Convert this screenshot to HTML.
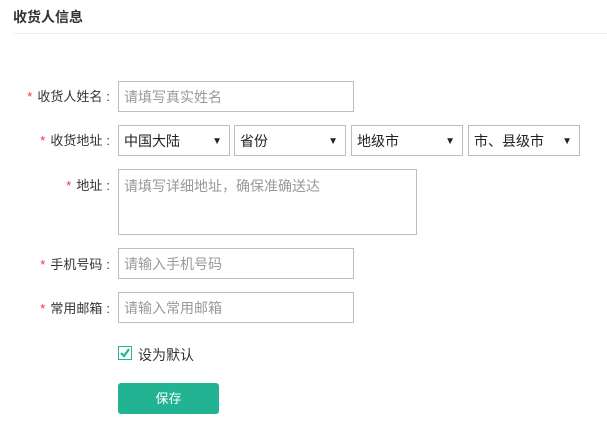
<!DOCTYPE html><html><head><meta charset="utf-8"><style>
*{margin:0;padding:0;box-sizing:border-box}
body{width:607px;height:427px;background:#fff;font-family:"Liberation Sans","Noto Sans CJK SC",sans-serif;font-size:13px;color:#333;position:relative;overflow:hidden}
.t{position:absolute;left:13px;top:7px;font-size:14px;font-weight:bold;color:#333}
.hr{position:absolute;left:13px;top:33px;width:594px;height:1px;background:#ececec}
.l{position:absolute;right:497px;font-size:13px;color:#333;white-space:nowrap;line-height:18px}
.l i{color:#e4393c;font-style:normal;margin-right:5px}
.l b{font-weight:normal;margin-left:4px}
.b{position:absolute;border:1px solid #bdbdbd;background:#fff;padding-left:5px;font-size:14px;color:#999;line-height:30px}
.s{color:#222}
.s span{position:absolute;right:7px;top:1px;font-size:10px;color:#222}
.cb{position:absolute;left:118px;top:346px;width:14px;height:14px;border:1px solid #22b392}
.btn{position:absolute;left:118px;top:383px;width:101px;height:31px;background:#22b392;border-radius:3px;color:#fff;text-align:center;line-height:31px;font-size:13px}
</style></head><body>
<div class="t">收货人信息</div><div class="hr"></div>
<div class="l" style="top:88px"><i>*</i>收货人姓名<b>:</b></div>
<div class="b" style="left:118px;top:81px;width:236px;height:31px">请填写真实姓名</div>
<div class="l" style="top:132px"><i>*</i>收货地址<b>:</b></div>
<div class="b s" style="left:118px;top:125px;width:112px;height:31px">中国大陆<span>▼</span></div>
<div class="b s" style="left:234px;top:125px;width:112px;height:31px">省份<span>▼</span></div>
<div class="b s" style="left:351px;top:125px;width:112px;height:31px">地级市<span>▼</span></div>
<div class="b s" style="left:468px;top:125px;width:112px;height:31px">市、县级市<span>▼</span></div>
<div class="l" style="top:177px"><i>*</i>地址<b>:</b></div>
<div class="b" style="left:118px;top:169px;width:299px;height:66px;line-height:20px;padding-top:6px">请填写详细地址，确保准确送达</div>
<div class="l" style="top:256px"><i>*</i>手机号码<b>:</b></div>
<div class="b" style="left:118px;top:248px;width:236px;height:31px">请输入手机号码</div>
<div class="l" style="top:300px"><i>*</i>常用邮箱<b>:</b></div>
<div class="b" style="left:118px;top:292px;width:236px;height:31px">请输入常用邮箱</div>
<div class="cb"><svg width="12" height="12" viewBox="0 0 12 12" style="position:absolute;left:0;top:0"><path d="M2 6l3 3 5-7" fill="none" stroke="#22b392" stroke-width="2.2"/></svg></div>
<div style="position:absolute;left:138px;top:345px;font-size:14px">设为默认</div>
<div class="btn">保存</div>
</body></html>
